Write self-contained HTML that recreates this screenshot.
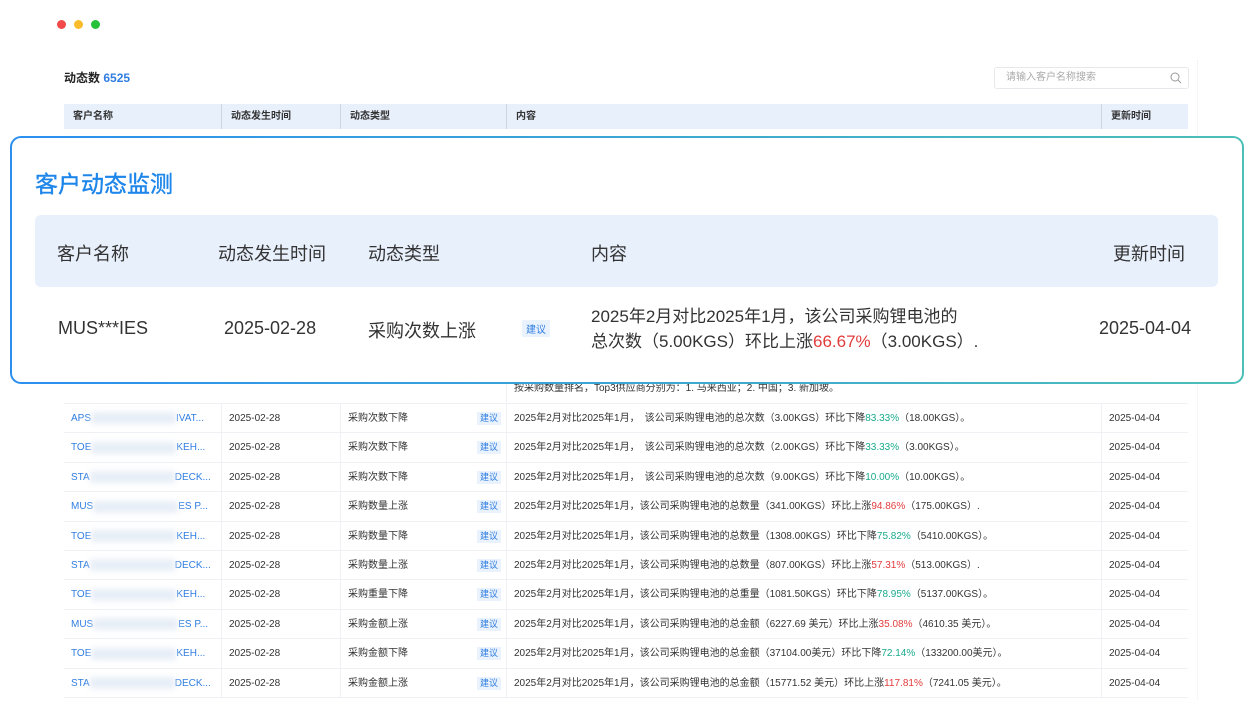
<!DOCTYPE html>
<html><head><meta charset="utf-8"><style>
*{margin:0;padding:0;box-sizing:border-box}
body{width:1252px;height:728px;background:#fff;position:relative;overflow:hidden;font-family:"Liberation Sans","Noto Sans CJK SC",sans-serif;color:#333}
.dot{position:absolute;top:20px;width:9px;height:9px;border-radius:50%}
.abs{position:absolute}
.hdr{position:absolute;left:64px;top:104px;width:1124px;height:25px;background:#e8f0fc;font-size:10px;font-weight:bold;color:#333}
.hdr div{position:absolute;top:0;height:25px;line-height:25px;padding-left:9px;border-left:1px solid #cfd6e0}
.row{position:absolute;left:64px;width:1124px;height:29.4px;border-bottom:1px solid #eef0f3;font-size:10px;color:#333}
.row div{position:absolute;top:0;height:29px;line-height:29px;padding-left:7px;border-left:1px solid #eef0f3;white-space:nowrap;overflow:hidden}
.nm{color:#2f7de1}
.blur{display:inline-block;width:85px;height:12px;vertical-align:middle;background:#e8eef7;filter:blur(3px)}
.tag{position:absolute;font-size:9px;color:#2f7de1;background:#eaf3fd;padding:0 3px;line-height:13px;top:8px!important;height:13px!important;border:none!important}
.g{color:#1aaa8c}.r{color:#e23c3c}
.card{position:absolute;left:10px;top:136px;width:1234px;height:248px;border-radius:11px;padding:2px;background:linear-gradient(90deg,#2b8ff0,#4cbfb8)}
.ci{width:100%;height:100%;background:#fff;border-radius:9px;position:relative}
</style></head><body>
<div class="dot" style="left:57px;background:#f24a4a"></div>
<div class="dot" style="left:74px;background:#fbbc2c"></div>
<div class="dot" style="left:91px;background:#25c13a"></div>
<div class="abs" style="left:1197px;top:60px;width:1px;height:640px;border-left:1px dotted #eee"></div>
<div class="abs" style="left:64px;top:69px;font-size:12px;font-weight:bold;color:#222">动态数 <span style="color:#2f7de1">6525</span></div>
<div class="abs" style="left:994px;top:67px;width:195px;height:22px;border:1px solid #e6e8eb;border-radius:3px;font-size:10px;color:#aaa;line-height:20px;padding-left:11px">请输入客户名称搜索
<svg style="position:absolute;right:6px;top:4px" width="12" height="12" viewBox="0 0 12 12"><circle cx="5" cy="5" r="4" fill="none" stroke="#999" stroke-width="1"/><path d="M8 8l3 3" stroke="#999" stroke-width="1"/></svg></div>
<div class="hdr"><div style="left:0;border:none">客户名称</div><div style="left:157px">动态发生时间</div><div style="left:276px">动态类型</div><div style="left:442px">内容</div><div style="left:1037px">更新时间</div></div>

<div class="row" style="top:360px;height:44px"><div style="left:442px;top:22px;height:20px;line-height:14px">按采购数量排名，Top3供应商分别为：1. 马来西亚；2. 中国；3. 新加坡。</div></div>

<div id="rows"></div>
<script>
var d=[["APS","IVAT...","采购次数下降","2025年2月对比2025年1月，　该公司采购锂电池的总次数（3.00KGS）环比下降<span class=g>83.33%</span>（18.00KGS）。"],
["TOE","KEH...","采购次数下降","2025年2月对比2025年1月，　该公司采购锂电池的总次数（2.00KGS）环比下降<span class=g>33.33%</span>（3.00KGS）。"],
["STA","DECK...","采购次数下降","2025年2月对比2025年1月，　该公司采购锂电池的总次数（9.00KGS）环比下降<span class=g>10.00%</span>（10.00KGS）。"],
["MUS","ES P...","采购数量上涨","2025年2月对比2025年1月，该公司采购锂电池的总数量（341.00KGS）环比上涨<span class=r>94.86%</span>（175.00KGS）."],
["TOE","KEH...","采购数量下降","2025年2月对比2025年1月，该公司采购锂电池的总数量（1308.00KGS）环比下降<span class=g>75.82%</span>（5410.00KGS）。"],
["STA","DECK...","采购数量上涨","2025年2月对比2025年1月，该公司采购锂电池的总数量（807.00KGS）环比上涨<span class=r>57.31%</span>（513.00KGS）."],
["TOE","KEH...","采购重量下降","2025年2月对比2025年1月，该公司采购锂电池的总重量（1081.50KGS）环比下降<span class=g>78.95%</span>（5137.00KGS）。"],
["MUS","ES P...","采购金额上涨","2025年2月对比2025年1月，该公司采购锂电池的总金额（6227.69 美元）环比上涨<span class=r>35.08%</span>（4610.35 美元）。"],
["TOE","KEH...","采购金额下降","2025年2月对比2025年1月，该公司采购锂电池的总金额（37104.00美元）环比下降<span class=g>72.14%</span>（133200.00美元）。"],
["STA","DECK...","采购金额上涨","2025年2月对比2025年1月，该公司采购锂电池的总金额（15771.52 美元）环比上涨<span class=r>117.81%</span>（7241.05 美元）。"]];
var h="";d.forEach(function(r,i){h+='<div class="row" style="top:'+(404+i*29.4)+'px"><div style="left:0;border:none;width:157px" class="nm">'+r[0]+'<span class="blur"></span>'+r[1]+'</div><div style="left:157px;width:119px">2025-02-28</div><div style="left:276px;width:166px">'+r[2]+'</div><span class="tag" style="left:413px">建议</span><div style="left:442px;width:595px">'+r[3]+'</div><div style="left:1037px;width:87px">2025-04-04</div></div>'});
document.getElementById("rows").innerHTML=h;
</script>

<div class="card"><div class="ci">
<div class="abs" style="left:23px;top:27px;font-size:23px;color:#1f86ea;-webkit-text-stroke:0.4px #1f86ea">客户动态监测</div>
<div class="abs" style="left:23px;top:77px;width:1183px;height:72px;background:#e8f0fc;border-radius:6px;font-size:18px;color:#333">
<span class="abs" style="left:22px;top:25px">客户名称</span><span class="abs" style="left:183px;top:25px">动态发生时间</span><span class="abs" style="left:333px;top:25px">动态类型</span><span class="abs" style="left:556px;top:25px">内容</span><span class="abs" style="left:1078px;top:25px">更新时间</span></div>
<div class="abs" style="left:46px;top:180px;font-size:18px;color:#333">MUS***IES</div>
<div class="abs" style="left:212px;top:180px;font-size:18px;color:#333">2025-02-28</div>
<div class="abs" style="left:356px;top:179px;font-size:18px;color:#333">采购次数上涨</div>
<div class="abs" style="left:510px;top:182px;font-size:10px;color:#2f7de1;background:#eaf3fd;padding:1px 4px">建议</div>
<div class="abs" style="left:579px;top:166px;font-size:17px;line-height:25px;color:#333">2025年2月对比2025年1月，该公司采购锂电池的<br>总次数（5.00KGS）环比上涨<span class="r">66.67%</span>（3.00KGS）.</div>
<div class="abs" style="left:1087px;top:180px;font-size:18px;color:#333">2025-04-04</div>
</div></div>
</body></html>
